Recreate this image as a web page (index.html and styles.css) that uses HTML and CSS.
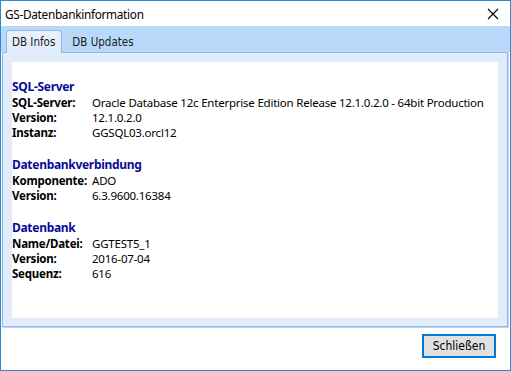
FILE: index.html
```html
<!DOCTYPE html>
<html>
<head>
<meta charset="utf-8">
<link rel="stylesheet" href="styles.css">
</head>
<body>
<div class="window">
  <div class="titlebar">
    <span class="title">GS-Datenbankinformation</span>
    <svg class="close" width="12" height="12" viewBox="0 0 12 12"><path d="M1 1 L11 11 M11 1 L1 11" stroke="#000" stroke-width="1.1" fill="none"/></svg>
  </div>
  <div class="tabstrip">
    <div class="tab active">DB Infos</div>
    <div class="tab">DB Updates</div>
  </div>
  <div class="panel">
    <div class="content">
      <div class="group">
        <div class="heading">SQL-Server</div>
        <div class="row"><span class="label">SQL-Server:</span><span class="value">Oracle Database 12c Enterprise Edition Release 12.1.0.2.0 - 64bit Production</span></div>
        <div class="row"><span class="label">Version:</span><span class="value">12.1.0.2.0</span></div>
        <div class="row"><span class="label">Instanz:</span><span class="value">GGSQL03.orcl12</span></div>
      </div>
      <div class="group">
        <div class="heading">Datenbankverbindung</div>
        <div class="row"><span class="label">Komponente:</span><span class="value">ADO</span></div>
        <div class="row"><span class="label">Version:</span><span class="value">6.3.9600.16384</span></div>
      </div>
      <div class="group">
        <div class="heading">Datenbank</div>
        <div class="row"><span class="label">Name/Datei:</span><span class="value">GGTEST5_1</span></div>
        <div class="row"><span class="label">Version:</span><span class="value">2016-07-04</span></div>
        <div class="row"><span class="label">Sequenz:</span><span class="value">616</span></div>
      </div>
    </div>
  </div>
  <div class="footer">
    <button class="btn">Schließen</button>
  </div>
</div>
</body>
</html>
```
FILE: styles.css
```css
html, body {
  margin: 0;
  padding: 0;
  background: #fff;
}
body {
  width: 511px;
  height: 371px;
  font-family: "Noto Sans", "DejaVu Sans", sans-serif;
  font-size: 11.5px;
  letter-spacing: -0.22px;
  color: #000;
}
.window {
  box-sizing: border-box;
  width: 511px;
  height: 371px;
  border: 1px solid #2a8ad6;
  display: flex;
  flex-direction: column;
  background: #fff;
}
.titlebar {
  height: 25px;
  display: flex;
  align-items: center;
  justify-content: space-between;
  padding: 0 11px 0 4px;
  flex-shrink: 0;
}
.title {
  font-size: 11.8px;
  letter-spacing: -0.3px;
}
.close {
  display: block;
}
.tabstrip {
  height: 26px;
  background: #bad9fa;
  display: flex;
  align-items: flex-end;
  padding-left: 5px;
  flex-shrink: 0;
}
.tab {
  height: 21px;
  line-height: 22px;
  padding: 0 9px 0 8px;
  font-family: "DejaVu Sans Condensed", "DejaVu Sans", sans-serif;
  font-stretch: condensed;
  font-size: 11.5px;
  letter-spacing: 0;
  color: #1b1b1b;
  margin-right: 2px;
}
.tab.active {
  height: 22px;
  background: linear-gradient(#e9f1fc, #dfebfb);
  border: 1px solid #92b8e6;
  border-bottom: none;
  border-radius: 3px 3px 0 0;
  position: relative;
  top: 1px;
  padding: 0 6px 0 5px;
}
.panel {
  margin: 0 2px 0 1px;
  height: 275px;
  box-sizing: border-box;
  background: #e1ecfb;
  border: 1px solid #92b8e6;
  box-shadow: 1px 1px 0 #bcd6f4;
  padding: 9px 9px 8px 9px;
  flex-shrink: 0;
}
.content {
  background: #fff;
  height: 100%;
  box-sizing: border-box;
  padding: 17px 0 0 0;
}
.group {
  margin-bottom: 17px;
}
.heading {
  font-weight: bold;
  color: #0a0a99;
  font-size: 12px;
  letter-spacing: -0.3px;
  line-height: 16px;
}
.row {
  display: flex;
  line-height: 15px;
  white-space: nowrap;
}
.label {
  width: 80px;
  font-weight: bold;
  flex-shrink: 0;
}
.footer {
  flex: 1;
  display: flex;
  justify-content: flex-end;
  align-items: flex-start;
  padding: 7px 14px 0 0;
}
.btn {
  width: 74px;
  height: 24px;
  box-sizing: border-box;
  border: 2px solid #0078d7;
  background: #e1e1e1;
  font-family: "DejaVu Sans Condensed", "DejaVu Sans", sans-serif;
  font-stretch: condensed;
  font-size: 12px;
  color: #000;
  padding: 0;
}
```
